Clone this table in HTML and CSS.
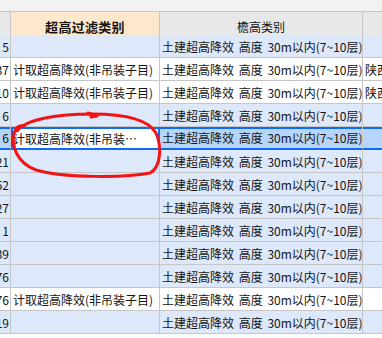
FILE: index.html
```html
<!DOCTYPE html>
<html lang="zh-CN">
<head>
<meta charset="utf-8">
<link rel="stylesheet" href="styles.css">
</head>
<body>
<div class="page">
  <div class="topstrip"></div>
  <div class="grid">
    <div class="h h0"></div>
    <div class="h h1">超高过滤类别</div>
    <div class="h h2">檐高类别</div>
    <div class="h h3"></div>

    <div class="c n blue"><span>5</span></div><div class="c t blue"></div><div class="c t w blue">土建超高降效 高度 30m以内(7~10层)</div><div class="c t blue last"></div>
    <div class="c n"><span>37</span></div><div class="c t">计取超高降效(非吊装子目)</div><div class="c t w">土建超高降效 高度 30m以内(7~10层)</div><div class="c t last">陕西</div>
    <div class="c n"><span>10</span></div><div class="c t">计取超高降效(非吊装子目)</div><div class="c t w">土建超高降效 高度 30m以内(7~10层)</div><div class="c t last">陕西</div>
    <div class="c n blue"><span>6</span></div><div class="c t blue"></div><div class="c t w blue">土建超高降效 高度 30m以内(7~10层)</div><div class="c t blue last"></div>
    <div class="c n sel"><span>6</span></div><div class="c t edit">计取超高降效(非吊装…</div><div class="c t w sel">土建超高降效 高度 30m以内(7~10层)</div><div class="c t sel last"></div>
    <div class="c n blue"><span>21</span></div><div class="c t blue"></div><div class="c t w blue">土建超高降效 高度 30m以内(7~10层)</div><div class="c t blue last"></div>
    <div class="c n blue"><span>52</span></div><div class="c t blue"></div><div class="c t w blue">土建超高降效 高度 30m以内(7~10层)</div><div class="c t blue last"></div>
    <div class="c n blue"><span>27</span></div><div class="c t blue"></div><div class="c t w blue">土建超高降效 高度 30m以内(7~10层)</div><div class="c t blue last"></div>
    <div class="c n blue"><span>1</span></div><div class="c t blue"></div><div class="c t w blue">土建超高降效 高度 30m以内(7~10层)</div><div class="c t blue last"></div>
    <div class="c n blue"><span>39</span></div><div class="c t blue"></div><div class="c t w blue">土建超高降效 高度 30m以内(7~10层)</div><div class="c t blue last"></div>
    <div class="c n blue"><span>76</span></div><div class="c t blue"></div><div class="c t w blue">土建超高降效 高度 30m以内(7~10层)</div><div class="c t blue last"></div>
    <div class="c n"><span>76</span></div><div class="c t">计取超高降效(非吊装子目)</div><div class="c t w">土建超高降效 高度 30m以内(7~10层)</div><div class="c t last"></div>
    <div class="c n blue"><span>19</span></div><div class="c t blue"></div><div class="c t w blue">土建超高降效 高度 30m以内(7~10层)</div><div class="c t blue last"></div>
  </div>
  <svg class="mark" width="382" height="338" viewBox="0 0 382 338">
    <path d="M17 131 C 26 119, 58 114, 92 114 C 124 114, 148 119, 156 133 C 162 147, 161 167, 150 173 C 125 178, 62 178, 36 170 C 17 163, 11 146, 14 133 C 16 127, 20 125, 24 126 M 88 113 L 97 116 L 91 117" fill="none" stroke="#f21414" stroke-width="3" stroke-linecap="round" stroke-linejoin="round"/>
  </svg>
</div>
</body>
</html>
```
FILE: styles.css
```css
html, body {
  margin: 0;
  padding: 0;
  background: #ffffff;
}
.page {
  position: relative;
  width: 382px;
  height: 338px;
  overflow: hidden;
  font-family: "Noto Sans CJK SC", "Noto Sans", sans-serif;
  font-size: 12px;
  color: #141414;
}
.topstrip {
  height: 11px;
  background: #f2f2f2;
  border-bottom: 1px solid #c6c6c6;
}
.grid {
  display: grid;
  grid-template-columns: 11px 149px 203px 19px;
  grid-auto-rows: 23px;
}
.h {
  box-sizing: border-box;
  height: 30px;
  border-right: 1px solid #c6c6c6;
  border-bottom: 1px solid #c6c6c6;
  background: #e8e8e8;
  display: flex;
  align-items: center;
  justify-content: center;
  white-space: nowrap;
  overflow: hidden;
  font-size: 12px;
}
.h1 {
  background: #fee8cd;
  border-bottom: 2px solid #0f6cf0;
  font-weight: bold;
  font-size: 13px;
  letter-spacing: 0.3px;
}
.h3 { border-right: none; }
.c {
  box-sizing: border-box;
  height: 23px;
  border-right: 1px solid #c6c6c6;
  border-bottom: 1px solid #c6c6c6;
  background: #ffffff;
  white-space: nowrap;
  overflow: hidden;
  display: flex;
  align-items: center;
}
.last { border-right: none; }
.t { padding-left: 2px; }
.w { word-spacing: 2px; }
.n {
  justify-content: flex-end;
  padding-right: 1px;
}
.n span { flex: none; }
.blue { background: #dde8fb; }
.sel {
  background: #b7d5fa;
  box-shadow: inset 0 2px 0 #0f6cf0;
  border-bottom: 2px solid #0f6cf0;
}
.edit {
  background: #ffffff;
  border: 2px solid #0f6cf0;
  padding-left: 0;
}
.mark {
  position: absolute;
  left: 0;
  top: 0;
  pointer-events: none;
}
```
